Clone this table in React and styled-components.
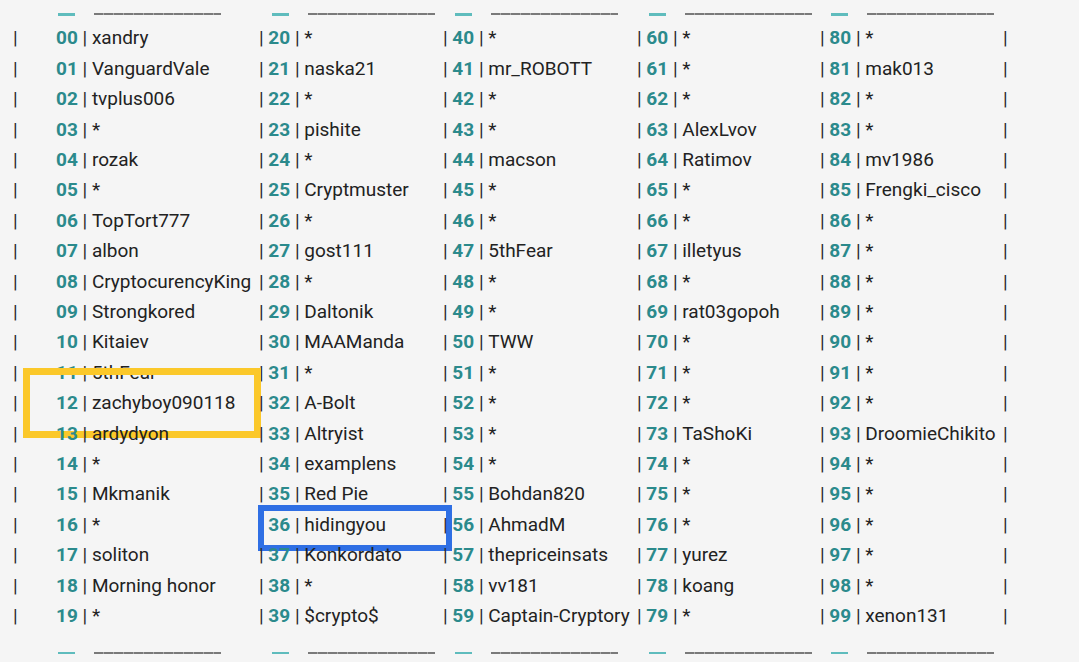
import React from "react";
import styled, { createGlobalStyle, css } from "styled-components";

const GlobalStyle = createGlobalStyle`
  html, body {
    margin: 0;
    padding: 0;
    background: #f5f5f5;
  }
  body {
    font-family: Roboto, "Noto Sans", sans-serif;
    color: #222;
    overflow: hidden;
  }
`;

const columns = [
  ["xandry", "VanguardVale", "tvplus006", "*", "rozak", "*", "TopTort777", "albon", "CryptocurencyKing", "Strongkored",
   "Kitaiev", "5thFear", "zachyboy090118", "ardydyon", "*", "Mkmanik", "*", "soliton", "Morning honor", "*"],
  ["*", "naska21", "*", "pishite", "*", "Cryptmuster", "*", "gost111", "*", "Daltonik",
   "MAAManda", "*", "A-Bolt", "Altryist", "examplens", "Red Pie", "hidingyou", "Konkordato", "*", "$crypto$"],
  ["*", "mr_ROBOTT", "*", "*", "macson", "*", "*", "5thFear", "*", "*",
   "TWW", "*", "*", "*", "*", "Bohdan820", "AhmadM", "thepriceinsats", "vv181", "Captain-Cryptory"],
  ["*", "*", "*", "AlexLvov", "Ratimov", "*", "*", "illetyus", "*", "rat03gopoh",
   "*", "*", "*", "TaShoKi", "*", "*", "*", "yurez", "koang", "*"],
  ["*", "mak013", "*", "*", "mv1986", "Frengki_cisco", "*", "*", "*", "*",
   "*", "*", "*", "DroomieChikito", "*", "*", "*", "*", "*", "xenon131"],
];

// cells with an annotation box drawn over them: "row-col"
const marks = {
  "12-0": "yellow",
  "16-1": "blue",
};

const GRID = "56px 203px 184px 194px 183px 183px auto";

const Table = styled.div`
  display: flex;
  flex-direction: column;
  font-size: 19px;
  line-height: 1;
`;

const Row = styled.div`
  display: grid;
  grid-template-columns: ${GRID};
  align-items: stretch;
  height: 30.4px;
  white-space: nowrap;
`;

const RuleRow = styled.div`
  display: grid;
  grid-template-columns: ${GRID};
  align-items: start;
  height: ${(p) => p.$h}px;
  padding-top: ${(p) => p.$top}px;
  box-sizing: border-box;
`;

const Lead = styled.div`
  display: flex;
  align-items: center;
  padding-left: 13px;
`;

const Pipe = styled.span`
  color: #2a2a2a;
`;

const EndPipe = styled.div`
  display: flex;
  align-items: center;
  color: #2a2a2a;
`;

const Num = styled.b`
  color: #2b8a8c;
  font-weight: 700;
`;

const boxStyles = {
  yellow: css`
    top: -19px;
    bottom: -20px;
    left: -33px;
    right: -2px;
    border: 7px solid #fbc82a;
  `,
  blue: css`
    top: -4px;
    bottom: -12px;
    left: -1px;
    right: -9px;
    border: 6px solid #2f6fe4;
  `,
};

const Cell = styled.div`
  position: relative;
  display: flex;
  align-items: center;
  white-space: pre;
  ${(p) =>
    p.$mark &&
    css`
      &::after {
        content: "";
        position: absolute;
        ${boxStyles[p.$mark]}
      }
    `}
`;

const RuleCell = styled.div`
  display: flex;
  gap: 19px;
  padding-left: ${(p) => p.$lead}px;
`;

const ShortRule = styled.div`
  width: 17px;
  height: 2.5px;
  background: #5fbcbd;
`;

const LongRule = styled.div`
  width: 127px;
  height: 2px;
  background: repeating-linear-gradient(90deg, #7a7a7a 0 9px, #a8a8a8 9px 10px);
`;

function Rules({ h, top }) {
  return (
    <RuleRow $h={h} $top={top}>
      <div />
      <RuleCell $lead={2}><ShortRule /><LongRule /></RuleCell>
      <RuleCell $lead={13}><ShortRule /><LongRule /></RuleCell>
      <RuleCell $lead={12}><ShortRule /><LongRule /></RuleCell>
      <RuleCell $lead={12}><ShortRule /><LongRule /></RuleCell>
      <RuleCell $lead={11}><ShortRule /><LongRule /></RuleCell>
    </RuleRow>
  );
}

export default function App() {
  const rows = Array.from({ length: 20 }, (_, r) => r);
  return (
    <>
      <GlobalStyle />
      <Table>
        <Rules h={22.8} top={13} />
        {rows.map((r) => (
          <Row key={r}>
            <Lead><Pipe>|</Pipe></Lead>
            {columns.map((col, c) => {
              const n = String(c * 20 + r).padStart(2, "0");
              return (
                <Cell key={c} $mark={marks[`${r}-${c}`]}>
                  {c > 0 && <Pipe>| </Pipe>}
                  <Num>{n}</Num>
                  <Pipe> | </Pipe>
                  {col[r]}
                </Cell>
              );
            })}
            <EndPipe>|</EndPipe>
          </Row>
        ))}
        <Rules h={30} top={21} />
      </Table>
    </>
  );
}
